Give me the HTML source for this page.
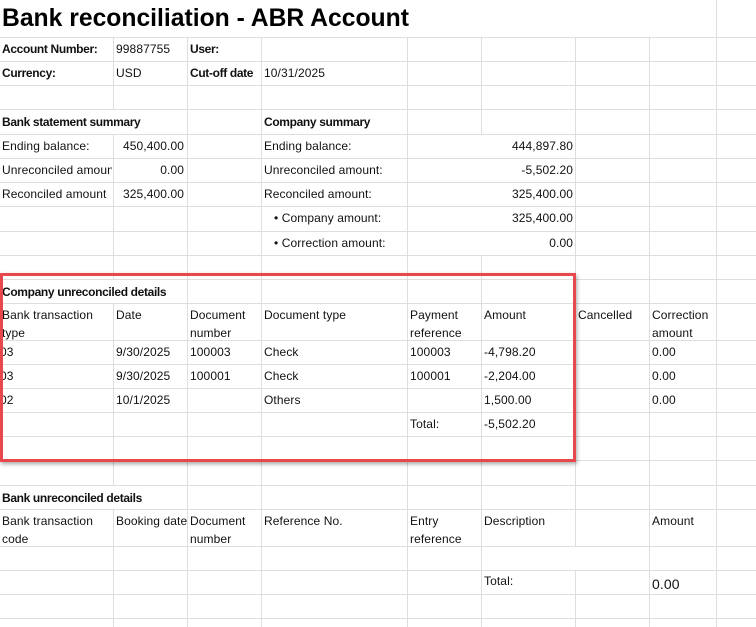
<!DOCTYPE html>
<html><head><meta charset="utf-8"><style>
html,body{margin:0;padding:0;background:#fff;width:756px;height:627px;overflow:hidden;position:relative;font-family:"Liberation Sans",Arial,sans-serif;font-size:12px;color:#111;}
.h{position:absolute;left:0;width:756px;height:1px;background:#dedede;}
.v{position:absolute;width:1px;background:#dedede;}
.t{position:absolute;white-space:nowrap;line-height:14px;letter-spacing:0.1px;}
.b{font-weight:bold;font-size:12px;letter-spacing:-0.35px;}
.r{text-align:right;}
#title{position:absolute;left:2px;top:4px;font-size:24.7px;font-weight:bold;letter-spacing:0px;color:#000;line-height:30px;}
#box{position:absolute;left:0px;top:273px;width:570px;height:183px;border:3px solid #e8474b;box-shadow:1px 2px 4px rgba(0,0,0,.35);}
</style></head><body>
<div id="lines"></div>
<div id="title">Bank reconciliation - ABR Account</div>

<div class="t b" style="left:2px;top:42px">Account Number:</div>
<div class="t" style="left:116px;top:42px">99887755</div>
<div class="t b" style="left:190px;top:42px">User:</div>
<div class="t b" style="left:2px;top:66px">Currency:</div>
<div class="t" style="left:116px;top:66px">USD</div>
<div class="t b" style="left:190px;top:66px">Cut-off date</div>
<div class="t" style="left:264px;top:66px">10/31/2025</div>

<div class="t b" style="left:2px;top:115px">Bank statement summary</div>
<div class="t b" style="left:264px;top:115px">Company summary</div>
<div class="t" style="left:2px;top:139px">Ending balance:</div>
<div class="t r" style="left:113px;width:71px;top:139px">450,400.00</div>
<div class="t" style="left:2px;top:163px;width:110px;overflow:hidden">Unreconciled amount</div>
<div class="t r" style="left:113px;width:71px;top:163px">0.00</div>
<div class="t" style="left:2px;top:187px;width:110px;overflow:hidden">Reconciled amount</div>
<div class="t r" style="left:113px;width:71px;top:187px">325,400.00</div>
<div class="t" style="left:264px;top:139px">Ending balance:</div>
<div class="t" style="left:264px;top:163px">Unreconciled amount:</div>
<div class="t" style="left:264px;top:187px">Reconciled amount:</div>
<div class="t" style="left:274px;top:211px">• Company amount:</div>
<div class="t" style="left:274px;top:236px">• Correction amount:</div>
<div class="t r" style="left:407px;width:166px;top:139px">444,897.80</div>
<div class="t r" style="left:407px;width:166px;top:163px">-5,502.20</div>
<div class="t r" style="left:407px;width:166px;top:187px">325,400.00</div>
<div class="t r" style="left:407px;width:166px;top:211px">325,400.00</div>
<div class="t r" style="left:407px;width:166px;top:236px">0.00</div>

<div class="t b" style="left:2px;top:285px">Company unreconciled details</div>
<div class="t" style="left:2px;top:306px;line-height:18px">Bank transaction<br>type</div>
<div class="t" style="left:116px;top:308px">Date</div>
<div class="t" style="left:190px;top:306px;line-height:18px">Document<br>number</div>
<div class="t" style="left:264px;top:308px">Document type</div>
<div class="t" style="left:410px;top:306px;line-height:18px">Payment<br>reference</div>
<div class="t" style="left:484px;top:308px">Amount</div>
<div class="t" style="left:578px;top:308px">Cancelled</div>
<div class="t" style="left:652px;top:306px;line-height:18px">Correction<br>amount</div>

<div class="t" style="left:0px;top:345px">03</div>
<div class="t" style="left:116px;top:345px">9/30/2025</div>
<div class="t" style="left:190px;top:345px">100003</div>
<div class="t" style="left:264px;top:345px">Check</div>
<div class="t" style="left:410px;top:345px">100003</div>
<div class="t" style="left:484px;top:345px">-4,798.20</div>
<div class="t" style="left:652px;top:345px">0.00</div>
<div class="t" style="left:0px;top:369px">03</div>
<div class="t" style="left:116px;top:369px">9/30/2025</div>
<div class="t" style="left:190px;top:369px">100001</div>
<div class="t" style="left:264px;top:369px">Check</div>
<div class="t" style="left:410px;top:369px">100001</div>
<div class="t" style="left:484px;top:369px">-2,204.00</div>
<div class="t" style="left:652px;top:369px">0.00</div>
<div class="t" style="left:0px;top:393px">02</div>
<div class="t" style="left:116px;top:393px">10/1/2025</div>
<div class="t" style="left:264px;top:393px">Others</div>
<div class="t" style="left:484px;top:393px">1,500.00</div>
<div class="t" style="left:652px;top:393px">0.00</div>
<div class="t" style="left:410px;top:417px">Total:</div>
<div class="t" style="left:484px;top:417px">-5,502.20</div>

<div class="t b" style="left:2px;top:491px">Bank unreconciled details</div>
<div class="t" style="left:2px;top:512px;line-height:18px">Bank transaction<br>code</div>
<div class="t" style="left:116px;top:514px;width:71px;overflow:hidden">Booking date</div>
<div class="t" style="left:190px;top:512px;line-height:18px">Document<br>number</div>
<div class="t" style="left:264px;top:514px">Reference No.</div>
<div class="t" style="left:410px;top:512px;line-height:18px">Entry<br>reference</div>
<div class="t" style="left:484px;top:514px">Description</div>
<div class="t" style="left:652px;top:514px">Amount</div>
<div class="t" style="left:484px;top:574px">Total:</div>
<div class="t" style="left:652px;top:576px;font-size:14px;line-height:16px">0.00</div>

<div id="box"></div>
<script>
var H=[37,61,85,109,134,158,182,206,231,255,279,303,340,364,388,412,436,460,485,509,546,570,594,618];
var X=[113,187,261,407,481,575,649,716];
var all=X, o='';
H.forEach(function(y){o+='<div class="h" style="top:'+y+'px"></div>';});
var R=[[0,37,[716]],[37,109,all],[109,134,[187,261,407,481,575,649,716]],[134,255,[113,187,261,407,575,649,716]],[255,279,all],[279,303,[187,261,407,481,575,649,716]],[303,485,all],[485,509,[187,261,407,481,575,649,716]],[509,546,all],[546,570,[113,187,261,407,481,649,716]],[570,627,all]];
R.forEach(function(r){r[2].forEach(function(x){o+='<div class="v" style="left:'+x+'px;top:'+r[0]+'px;height:'+(r[1]-r[0])+'px"></div>';});});
document.getElementById('lines').innerHTML=o;
</script>
</body></html>
